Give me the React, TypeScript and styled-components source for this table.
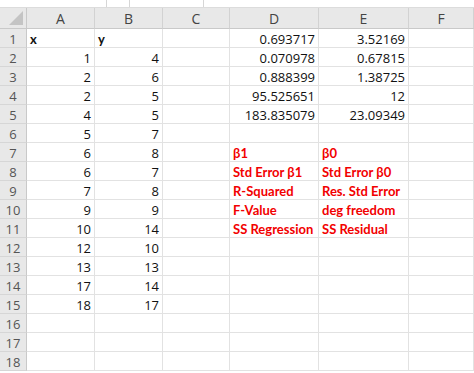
import styled, { createGlobalStyle } from 'styled-components'

const GlobalStyle = createGlobalStyle`
  html, body {
    margin: 0;
    padding: 0;
    background: #ffffff;
    overflow: hidden;
  }
  body {
    font-family: "Open Sans", "Noto Sans", sans-serif;
  }
`

const Sheet = styled.div`
  width: 474px;
  height: 373px;
  overflow: hidden;
  display: flex;
  flex-direction: column;
`

const TopStrip = styled.div`
  height: 7px;
  flex: none;
  display: flex;
  background: #ffffff;
  border-bottom: 1px solid #dcdcdc;
`

const StripPart = styled.div<{ $w: number }>`
  width: ${(p) => p.$w}px;
  flex: none;
  border-right: 1px solid #d6d6d6;
  box-sizing: border-box;
`

const Grid = styled.div`
  display: grid;
  grid-template-columns: 27px 68px 68px 67px 89px 90px 1fr;
  grid-auto-rows: 19px;
  flex: none;
`

const HeaderRow = styled.div`
  display: grid;
  grid-template-columns: 27px 68px 68px 67px 89px 90px 1fr;
  height: 21px;
  flex: none;
`

const Corner = styled.div`
  background: #e8e8e8;
  border-right: 1px solid #c9c9c9;
  border-bottom: 1px solid #c9c9c9;
  box-sizing: border-box;
  display: flex;
  align-items: flex-end;
  justify-content: flex-end;
  padding: 0 3px 3px 0;
`

const ColHead = styled.div`
  background: #e8e8e8;
  border-right: 1px solid #d2d2d2;
  border-bottom: 1px solid #c9c9c9;
  box-sizing: border-box;
  color: #444444;
  font-size: 14px;
  line-height: 17px;
  padding-top: 2px;
  text-align: center;
`

const RowHead = styled.div`
  background: #e8e8e8;
  border-right: 1px solid #c9c9c9;
  border-bottom: 1px solid #d6d6d6;
  box-sizing: border-box;
  color: #555555;
  font-size: 13px;
  line-height: 17px;
  padding-top: 2px;
  text-align: center;
`

const Cell = styled.div<{ $align?: 'left' | 'right'; $bold?: boolean; $red?: boolean }>`
  border-right: 1px solid #e2e2e2;
  border-bottom: 1px solid #e2e2e2;
  box-sizing: border-box;
  font-size: 13px;
  line-height: 17px;
  padding: 2px 3px 0 3px;
  white-space: nowrap;
  overflow: visible;
  position: relative;
  z-index: 1;
  text-align: ${(p) => p.$align ?? 'left'};
  font-family: ${(p) => (p.$bold ? '"Lato", "Open Sans", sans-serif' : 'inherit')};
  font-weight: ${(p) => (p.$bold ? 700 : 400)};
  color: ${(p) => (p.$red ? '#f20000' : '#111111')};
`

const cols = ['A', 'B', 'C', 'D', 'E', 'F']

type Row = {
  a?: string
  b?: string
  d?: string
  e?: string
  label?: boolean
}

const rows: Row[] = [
  { a: 'x', b: 'y', d: '0.693717', e: '3.52169' },
  { a: '1', b: '4', d: '0.070978', e: '0.67815' },
  { a: '2', b: '6', d: '0.888399', e: '1.38725' },
  { a: '2', b: '5', d: '95.525651', e: '12' },
  { a: '4', b: '5', d: '183.835079', e: '23.09349' },
  { a: '5', b: '7' },
  { a: '6', b: '8', d: 'β1', e: 'β0', label: true },
  { a: '6', b: '7', d: 'Std Error β1', e: 'Std Error β0', label: true },
  { a: '7', b: '8', d: 'R-Squared', e: 'Res. Std Error', label: true },
  { a: '9', b: '9', d: 'F-Value', e: 'deg freedom', label: true },
  { a: '10', b: '14', d: 'SS Regression', e: 'SS Residual', label: true },
  { a: '12', b: '10' },
  { a: '13', b: '13' },
  { a: '17', b: '14' },
  { a: '18', b: '17' },
  {},
  {},
  {},
]

const CornerMark = () => (
  <svg width="14" height="14" viewBox="0 0 14 14">
    <polygon points="14,0 14,14 0,14" fill="#c4c4c4" />
  </svg>
)

export default function App() {
  return (
    <Sheet>
      <GlobalStyle />
      <TopStrip>
        <StripPart $w={107} />
        <StripPart $w={23} />
        <StripPart $w={74} />
      </TopStrip>
      <HeaderRow>
        <Corner>
          <CornerMark />
        </Corner>
        {cols.map((c) => (
          <ColHead key={c}>{c}</ColHead>
        ))}
      </HeaderRow>
      <Grid>
        {rows.map((r, i) => {
          const header = i === 0
          return [
            <RowHead key={`h${i}`}>{i + 1}</RowHead>,
            <Cell key={`a${i}`} $align={header ? 'left' : 'right'} $bold={header}>
              {r.a}
            </Cell>,
            <Cell key={`b${i}`} $align={header ? 'left' : 'right'} $bold={header}>
              {r.b}
            </Cell>,
            <Cell key={`c${i}`} />,
            <Cell key={`d${i}`} $align={r.label ? 'left' : 'right'} $bold={r.label} $red={r.label}>
              {r.d}
            </Cell>,
            <Cell key={`e${i}`} $align={r.label ? 'left' : 'right'} $bold={r.label} $red={r.label}>
              {r.e}
            </Cell>,
            <Cell key={`f${i}`} />,
          ]
        })}
      </Grid>
    </Sheet>
  )
}
